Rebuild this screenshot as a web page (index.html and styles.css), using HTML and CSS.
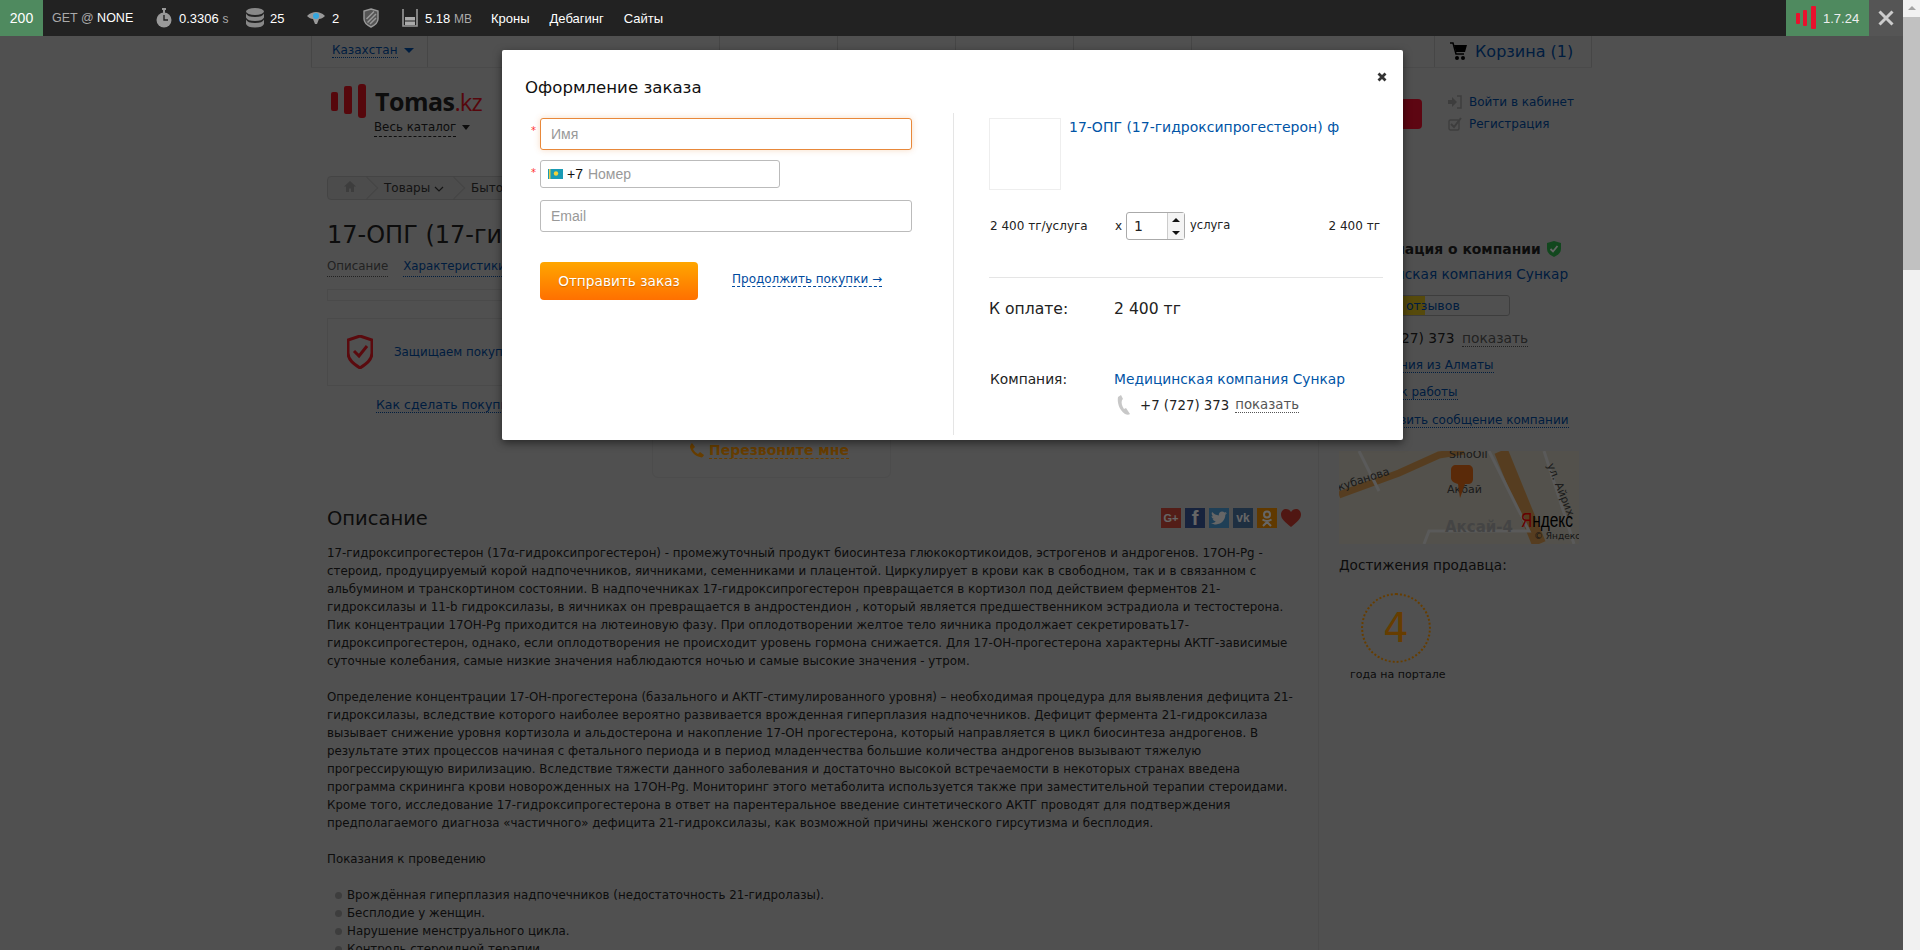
FILE: index.html
```html
<!DOCTYPE html>
<html>
<head>
    <meta charset="utf-8">
    <title>Оформление заказа - Tomas.kz</title>
    <link rel="stylesheet" href="styles.css">
</head>
<body>
<div class="window">
    <div class="viewport">
        <!-- debug toolbar -->
        <div class="toolbar">
            <div class="tb-status">200</div>
            <div class="tb-route"><span class="tb-dim">GET @</span> NONE</div>
            <div class="tb-item tb-time">
                <svg width="16" height="20" viewBox="0 0 16 20"><rect x="6" y="0" width="4" height="2" fill="#999"/><rect x="7" y="1" width="2" height="4" fill="#999"/><circle cx="8" cy="12" r="7.5" fill="#999"/><path d="M8 7v5h4" fill="none" stroke="#222" stroke-width="1.4"/></svg>
                <span>0.3306 <span class="tb-dim tb-small">s</span></span>
            </div>
            <div class="tb-item tb-db">
                <svg width="18" height="20" viewBox="0 0 18 20"><g fill="#888"><ellipse cx="9" cy="3.5" rx="9" ry="3.5"/><path d="M0 5.5c1 2.5 4 3.500 9 3.500s8-1 9-3.500v4c-1 2.500-4 3.500-9 3.500s-8-1-9-3.500z"/><path d="M0 11.500c1 2.500 4 3.500 9 3.500s8-1 9-3.500v4.500c-1 2.500-4 3.500-9 3.500s-8-1-9-3.500z"/></g></svg>
                <span>25</span>
            </div>
            <div class="tb-item tb-eye">
                <svg width="18" height="16" viewBox="0 0 18 16"><path d="M0 6c3-3 6-4 9-4s6 1 9 4c-2 2-4 3-6 3l-2 5h-2l-2-5c-2 0-4-1-6-3z" fill="#999"/><circle cx="9" cy="6" r="3" fill="#35a7e0"/></svg>
                <span>2</span>
            </div>
            <div class="tb-item tb-shield">
                <svg width="16" height="20" viewBox="0 0 16 20"><path d="M8 1l7 2v8c0 4-3 6-7 8-4-2-7-4-7-8V3z" fill="#555" stroke="#999" stroke-width="1.400"/><path d="M3.500 11L11 3.500M4.500 14.500L13 6M7 16l6-6" stroke="#999" stroke-width="1.500"/></svg>
            </div>
            <div class="tb-item tb-mem">
                <svg width="16" height="20" viewBox="0 0 16 20"><path d="M1 1v17h14V1" fill="none" stroke="#999" stroke-width="1.600"/><rect x="3" y="9" width="10" height="3.500" fill="#aaa"/><rect x="3" y="13.500" width="10" height="3.500" fill="#aaa"/></svg>
                <span>5.18 <span class="tb-dim tb-small">MB</span></span>
            </div>
            <div class="tb-menu">Кроны</div>
            <div class="tb-menu">Дебагинг</div>
            <div class="tb-menu">Сайты</div>
            <div class="tb-version">
                <svg width="20" height="24" viewBox="0 0 20 24"><rect x="0" y="7" width="4" height="11" rx="1" fill="#e8112d"/><rect x="7" y="4" width="4" height="16" rx="1" fill="#e8112d"/><rect x="15" y="0" width="5" height="23" rx="1" fill="#e8112d"/></svg>
                <span>1.7.24</span>
            </div>
            <div class="tb-close">
                <svg width="16" height="16" viewBox="0 0 16 16"><path d="M1.500 1.500l13 13M14.500 1.500l-13 13" stroke="#ccc" stroke-width="3"/></svg>
            </div>
        </div>

        <div class="stage">
            <div class="wrap">
                <div class="topnav">
                    <div class="region"><span class="dashed-link">Казахстан</span><span class="caret"></span></div>
                    <div class="topnav-cell w-292"></div>
                    <div class="topnav-cell"></div>
                    <div class="topnav-cell"></div>
                    <div class="topnav-cell"></div>
                    <div class="topnav-cell"></div>
                    <div class="topnav-fill"></div>
                    <div class="cart">
                        <svg width="17" height="19" viewBox="0 0 17 19"><path d="M0 1h3l3 11h8" fill="none" stroke="#000" stroke-width="1.500"/><path d="M4 3h13l-2 7H6z" fill="#000"/><circle cx="7" cy="16" r="2" fill="#000"/><circle cx="13" cy="16" r="2" fill="#000"/></svg>
                        <span>Корзина (1)</span>
                    </div>
                </div>

                <div class="header">
                    <div class="logo-block">
                        <div class="logo">
                            <svg width="36" height="34" viewBox="0 0 36 34"><rect x="0" y="8" width="7" height="19" rx="2" fill="#d8121f"/><rect x="13" y="2" width="8" height="28" rx="2" fill="#d8121f"/><rect x="27" y="0" width="8" height="34" rx="3" fill="#d8121f"/></svg>
                            <span class="logo-name">Tomas<span class="logo-kz">.kz</span></span>
                        </div>
                        <div class="catalog"><span class="catalog-link">Весь каталог</span><span class="caret caret-dark"></span></div>
                    </div>
                    <div class="search-btn"></div>
                    <div class="auth">
                        <div class="auth-row">
                            <svg width="14" height="14" viewBox="0 0 14 14"><path d="M0 5h4V2l5 5-5 5V9H0z" fill="#999"/><path d="M9 1h4v12H9" fill="none" stroke="#999" stroke-width="1.500"/></svg>
                            <span>Войти в кабинет</span>
                        </div>
                        <div class="auth-row">
                            <svg width="14" height="14" viewBox="0 0 14 14"><rect x="1" y="3" width="10" height="10" rx="1.500" fill="none" stroke="#999" stroke-width="1.400"/><path d="M3 7l3 3 7-9" fill="none" stroke="#999" stroke-width="2"/></svg>
                            <span>Регистрация</span>
                        </div>
                    </div>
                </div>

                <div class="columns">
                    <div class="main">
                        <div class="crumbs">
                            <span class="crumb crumb-home"><svg width="12" height="11" viewBox="0 0 12 11"><path d="M6 0l6 5.500h-2V11H7V7.500H5V11H2V5.500H0z" fill="#999"/></svg></span>
                            <span class="crumb">Товары <svg width="10" height="6" viewBox="0 0 10 6"><path d="M1 1l4 4 4-4" fill="none" stroke="#333" stroke-width="1.200"/></svg></span>
                            <span class="crumb">Бытовая техника</span>
                        </div>
                        <h1 class="product-title">17-ОПГ (17-гидроксипрогестерон) ф</h1>
                        <div class="tabs">
                            <span class="tab tab-active">Описание</span>
                            <span class="tab">Характеристики</span>
                        </div>
                        <div class="tabs-bar"></div>
                        <div class="protect">
                            <svg width="26" height="34" viewBox="0 0 26 34"><path d="M13 1l12 4v13c0 7-6 11-12 15C7 29 1 25 1 18V5z" fill="none" stroke="#e01b24" stroke-width="3"/><path d="M7 16l5 5 8-10" fill="none" stroke="#e01b24" stroke-width="3"/></svg>
                            <span>Защищаем покупателей</span>
                        </div>
                        <div class="howto"><span class="dotted-link">Как сделать покупку</span></div>
                        <div class="callback">
                            <svg width="16" height="16" viewBox="0 0 16 16"><path d="M3 1l3 4-2 2c1 2 3 4 5 5l2-2 4 3c-1 2-2 3-4 2C6 14 2 10 1 5c0-2 1-3 2-4z" fill="#f90"/></svg>
                            <span class="callback-link">Перезвоните мне</span>
                        </div>

                        <div class="desc-head">
                            <h2>Описание</h2>
                            <div class="share">
                                <span class="soc soc-g">G+</span>
                                <span class="soc soc-f">f</span>
                                <span class="soc soc-t"><svg width="16" height="14" viewBox="0 0 16 14"><path d="M16 2c-.6.300-1.200.400-1.900.500.700-.400 1.200-1 1.400-1.800-.600.400-1.300.600-2.100.800C12.800.900 12 .500 11 .500 9.200.500 7.800 2 7.800 3.700c0 .300 0 .500.100.700C5.200 4.300 2.800 3 1.100 1 .800 1.500.700 2 .700 2.600c0 1.100.600 2.100 1.400 2.700-.500 0-1-.200-1.500-.400 0 1.600 1.100 2.900 2.600 3.200-.500.100-1 .100-1.500 0 .400 1.300 1.600 2.200 3 2.300C3.600 11.500 2 12 0 11.900 1.400 12.800 3.100 13.400 5 13.400c6 0 9.300-5 9.300-9.300v-.400c.700-.500 1.200-1 1.700-1.700z" fill="#fff"/></svg></span>
                                <span class="soc soc-v">vk</span>
                                <span class="soc soc-o"><svg width="12" height="17" viewBox="0 0 12 17"><circle cx="6" cy="4.500" r="3" fill="none" stroke="#fff" stroke-width="2"/><path d="M1.500 9.500c3 2 6 2 9 0M6 11v1.500M2 16l4-4 4 4" fill="none" stroke="#fff" stroke-width="2"/></svg></span>
                                <svg class="heart" width="20" height="18" viewBox="0 0 20 18"><path d="M10 18C4 13 0 10 0 5.500 0 2 2.500 0 5 0c2 0 4 1 5 3 1-2 3-3 5-3 2.500 0 5 2 5 5.500C20 10 16 13 10 18z" fill="#c93a2e"/></svg>
                            </div>
                        </div>
                        <div class="desc">
                            <p>17-гидроксипрогестерон (17α-гидроксипрогестерон) - промежуточный продукт биосинтеза глюкокортикоидов, эстрогенов и андрогенов. 17OH-Pg - стероид, продуцируемый корой надпочечников, яичниками, семенниками и плацентой. Циркулирует в крови как в свободном, так и в связанном с альбумином и транскортином состоянии. В надпочечниках 17-гидроксипрогестерон превращается в кортизол под действием ферментов 21-гидроксилазы и 11-b гидроксилазы, в яичниках он превращается в андростендион , который является предшественником эстрадиола и тестостерона. Пик концентрации 17OH-Pg приходится на лютеиновую фазу. При оплодотворении желтое тело яичника продолжает секретировать17-гидроксипрогестерон, однако, если оплодотворения не происходит уровень гормона снижается. Для 17-OH-прогестерона характерны АКТГ-зависимые суточные колебания, самые низкие значения наблюдаются ночью и самые высокие значения - утром.</p>
                            <p>Определение концентрации 17-OH-прогестерона (базального и АКТГ-стимулированного уровня) – необходимая процедура для выявления дефицита 21-гидроксилазы, вследствие которого наиболее вероятно развивается врожденная гиперплазия надпочечников. Дефицит фермента 21-гидроксилаза вызывает снижение уровня кортизола и альдостерона и накопление 17-OH прогестерона, который направляется в цикл биосинтеза андрогенов. В результате этих процессов начиная с фетального периода и в период младенчества большие количества андрогенов вызывают тяжелую прогрессирующую вирилизацию. Вследствие тяжести данного заболевания и достаточно высокой встречаемости в некоторых странах введена программа скрининга крови новорожденных на 17OH-Pg. Мониторинг этого метаболита используется также при заместительной терапии стероидами. Кроме того, исследование 17-гидроксипрогестерона в ответ на парентеральное введение синтетического АКТГ проводят для подтверждения предполагаемого диагноза «частичного» дефицита 21-гидроксилазы, как возможной причины женского гирсутизма и бесплодия.</p>
                            <p>Показания к проведению</p>
                            <ul>
                                <li>Врождённая гиперплазия надпочечников (недостаточность 21-гидролазы).</li>
                                <li>Бесплодие у женщин.</li>
                                <li>Нарушение менструального цикла.</li>
                                <li>Контроль стероидной терапии.</li>
                            </ul>
                        </div>
                    </div>

                    <div class="side">
                        <div class="side-title">Информация о компании
                            <svg width="14" height="16" viewBox="0 0 14 16"><path d="M7 0l7 2v6c0 4-3 6-7 8-4-2-7-4-7-8V2z" fill="#2fb24c"/><path d="M3.500 8l2.500 2.500L10.500 5" fill="none" stroke="#fff" stroke-width="1.800"/></svg>
                        </div>
                        <div class="side-company">Медицинская компания Сункар</div>
                        <div class="rating"><div class="rating-fill"></div><span>5 отзывов</span></div>
                        <div class="side-phone">+7 (727) 373 <span class="show-link">показать</span></div>
                        <div class="side-link"><span class="dotted-link">Компания из Алматы</span></div>
                        <div class="side-link"><span class="dotted-link">График работы</span></div>
                        <div class="side-link"><span class="dotted-link">Отправить сообщение компании</span></div>
                        <div class="map">
                            <svg width="240" height="93" viewBox="0 0 240 93">
                                <rect width="240" height="93" fill="#cfcbbd"/>
                                <path d="M0 44L60 22 100 4 125 0" fill="none" stroke="#d89a50" stroke-width="7"/>
                                <path d="M162 0l38 93" fill="none" stroke="#d89a50" stroke-width="14"/>
                                <path d="M20 0l20 40M150 0l40 80H90l-5 13M205 0l30 93" fill="none" stroke="#e0e0e0" stroke-width="3"/>
                                <text x="0" y="40" class="map-label" transform="rotate(-18 0 40)">кубанова</text>
                                <text x="110" y="7" class="map-label">SinoOil</text>
                                <text x="108" y="42" class="map-label">Акбай</text>
                                <text x="106" y="81" class="map-big">Аксай-4</text>
                                <text x="208" y="14" class="map-label" transform="rotate(68 208 14)">ул. Айрих</text>
                                <path d="M112 19c0-3 2-5 5-5h12c3 0 5 2 5 5v9c0 3-2 5-5 5h-3l-5 14-2-14c-4-1-7-3-7-6z" fill="#e06a18"/>
                                <text x="182" y="76" class="map-ya" textLength="52" lengthAdjust="spacingAndGlyphs"><tspan fill="#f00">Я</tspan>ндекс</text>
                                <text x="195" y="88" class="map-copy">© Яндекс</text>
                            </svg>
                        </div>
                        <div class="side-head">Достижения продавца:</div>
                        <div class="years">
                            <div class="years-circle">4</div>
                            <div class="years-label">года на портале</div>
                        </div>
                    </div>
                </div>
            </div>

            <div class="overlay"></div>

            <!-- order popup -->
            <div class="modal">
                <svg class="modal-close" width="10" height="10" viewBox="0 0 10 10"><path d="M1.500 1.500l7 7M8.500 1.500l-7 7" stroke="#333" stroke-width="2.800"/></svg>
                <div class="modal-title">Оформление заказа</div>
                <div class="modal-body">
                    <div class="order-form">
                        <div class="field">
                            <span class="req">*</span>
                            <input class="input input-focus" type="text" placeholder="Имя">
                        </div>
                        <div class="field field-phone">
                            <span class="req">*</span>
                            <div class="phone">
                                <svg class="flag" width="15" height="10" viewBox="0 0 15 10"><rect width="15" height="10" fill="#1a9bb5"/><circle cx="8" cy="4.500" r="2.200" fill="#f5d33a"/><rect x="1" y="0" width="1.500" height="10" fill="#e6cc4a"/></svg>
                                <span class="phone-code">+7</span>
                                <input class="phone-input" type="text" placeholder="Номер">
                            </div>
                        </div>
                        <div class="field field-email">
                            <input class="input" type="text" placeholder="Email">
                        </div>
                        <div class="form-actions">
                            <button class="send-btn">Отправить заказ</button>
                            <span class="continue">Продолжить покупки →</span>
                        </div>
                    </div>
                    <div class="order-summary">
                        <div class="item">
                            <div class="item-img"></div>
                            <a class="item-name">17-ОПГ (17-гидроксипрогестерон) ф</a>
                        </div>
                        <div class="item-row">
                            <span class="item-price">2 400 тг/услуга</span>
                            <span class="item-x">х</span>
                            <div class="qty">
                                <span class="qty-val">1</span>
                                <div class="qty-spin">
                                    <span class="spin-up"></span>
                                    <span class="spin-down"></span>
                                </div>
                            </div>
                            <span class="item-unit">услуга</span>
                            <span class="item-total">2 400 тг</span>
                        </div>
                        <div class="pay-row">
                            <span class="pay-label">К оплате:</span>
                            <span>2 400 тг</span>
                        </div>
                        <div class="company-row">
                            <span class="company-label">Компания:</span>
                            <a class="company-name">Медицинская компания Сункар</a>
                        </div>
                        <div class="company-phone">
                            <svg width="13" height="20" viewBox="0 0 13 20"><path d="M4 0L1 2C0 7 2 15 8 19c2 1 4 1 5 0l-4-6-2 1C5 11 4 8 5 5l1-1z" fill="#c8c8c8"/></svg>
                            <span>+7 (727) 373</span>
                            <span class="show-link">показать</span>
                        </div>
                    </div>
                </div>
            </div>
        </div>
    </div>
    <div class="scrollbar">
        <div class="scroll-up"></div>
        <div class="scroll-thumb"></div>
    </div>
</div>
</body>
</html>
```

FILE: styles.css
```css
* {
    box-sizing: border-box;
}
html, body {
    margin: 0;
    padding: 0;
    height: 100%;
    overflow: hidden;
}
body {
    background: #c8c8c8;
    color: #222;
    font-family: "DejaVu Sans", Verdana, sans-serif;
    font-size: 11.83px;
}
.window {
    display: flex;
    height: 950px;
}
.viewport {
    flex: 1;
    min-width: 0;
    display: flex;
    flex-direction: column;
}

/* toolbar */
.toolbar {
    height: 36px;
    flex: none;
    display: flex;
    align-items: center;
    background: #222;
    color: #fff;
    font-family: "Liberation Sans", Arial, sans-serif;
    font-size: 13px;
}
.tb-dim {
    color: #aaa;
}
.tb-small {
    font-size: 12px;
}
.tb-status {
    width: 43px;
    height: 36px;
    line-height: 36px;
    text-align: center;
    background: #4f8a5f;
    font-size: 14px;
}
.tb-route {
    margin-left: 9px;
    width: 104px;
    font-size: 12.5px;
}
.tb-item {
    display: flex;
    align-items: center;
    gap: 7px;
}
.tb-time {
    width: 90px;
}
.tb-db {
    gap: 6px;
    width: 61px;
}
.tb-eye {
    gap: 7px;
    width: 56px;
}
.tb-shield {
    width: 39px;
}
.tb-mem {
    width: 89px;
}
.tb-menu {
    margin-right: 20px;
}
.tb-version {
    margin-left: auto;
    width: 83px;
    height: 36px;
    display: flex;
    align-items: center;
    gap: 7px;
    padding-left: 10px;
    background: #4f8a5f;
    color: #eee;
}
.tb-close {
    width: 34px;
    height: 36px;
    background: #555;
    display: flex;
    align-items: center;
    justify-content: center;
}

/* scrollbar */
.scrollbar {
    width: 17px;
    flex: none;
    background: #f1f1f1;
}
.scroll-up {
    height: 17px;
    position: relative;
}
.scroll-up::after {
    content: "";
    position: absolute;
    left: 5px;
    top: 6px;
    border: 4px solid transparent;
    border-top: 0;
    border-bottom: 4px solid #a3a3a3;
}
.scroll-thumb {
    height: 253px;
    background: #c1c1c1;
}

/* page under the overlay */
.stage {
    flex: 1;
    min-height: 0;
    position: relative;
    overflow: hidden;
}
.overlay {
    position: absolute;
    inset: 0;
    background: rgba(0, 0, 0, .6);
}
.wrap {
    width: 1281px;
    margin: 0 auto;
}
.topnav {
    display: flex;
    height: 32px;
    border-bottom: 1px solid #b8b8b8;
}
.region {
    width: 117px;
    padding: 7px 0 0 20px;
    border-left: 1px solid #b0b0b0;
    border-right: 1px solid #b0b0b0;
    color: #004a9e;
    font-size: 12px;
}
.dashed-link {
    border-bottom: 1px dotted #004a9e;
}
.caret {
    display: inline-block;
    margin-left: 6px;
    vertical-align: middle;
    border: 5px solid transparent;
    border-top: 5px solid #004a9e;
    border-bottom: 0;
}
.caret-dark {
    border-width: 4px;
    border-top-width: 5px;
    border-bottom: 0;
    margin-left: 6px;
    border-top-color: #222;
}
.topnav-cell {
    width: 118px;
    border-right: 1px solid #b0b0b0;
}
.w-292 {
    width: 292px;
}
.topnav-fill {
    flex: 1;
}
.cart {
    width: 158px;
    display: flex;
    align-items: center;
    gap: 8px;
    padding-left: 15px;
    border-left: 1px solid #b0b0b0;
    border-right: 1px solid #b0b0b0;
    color: #004a9e;
    font-size: 16px;
}
.header {
    height: 108px;
    display: flex;
    padding: 16px 0 0 20px;
}
.logo-block {
    width: 160px;
    flex: none;
}
.logo {
    display: flex;
    align-items: center;
    gap: 8px;
    height: 34px;
}
.logo-name {
    font-family: "Open Sans", sans-serif;
    font-size: 25px;
    font-weight: 700;
    color: #222;
    letter-spacing: -.5px;
}
.logo-kz {
    color: #d8121f;
    font-weight: 400;
    font-size: 24px;
    letter-spacing: -1px;
}
.catalog {
    margin: 2px 0 0 43px;
}
.catalog-link {
    border-bottom: 1px dashed #222;
    padding-bottom: 2px;
}
.search-btn {
    width: 100px;
    height: 30px;
    margin: 15px 26px 0 auto;
    border-radius: 4px;
    background: #e8112d;
}
.auth {
    width: 144px;
    flex: none;
    margin-top: 7px;
    color: #004a9e;
    font-size: 12px;
}
.auth-row {
    display: flex;
    align-items: center;
    gap: 7px;
    height: 22px;
    white-space: nowrap;
}
.columns {
    display: flex;
}
.main {
    width: 1008px;
    padding: 0 17px 0 16px;
    border-right: 1px solid #bbb;
    flex: none;
}
.crumbs {
    height: 24px;
    display: flex;
    align-items: center;
    border: 1px solid #aaa;
    border-radius: 4px;
    background: #bdbdbd;
    font-size: 12px;
    color: #333;
}
.crumb {
    position: relative;
    padding: 0 27px 0 0;
}
.crumb::after {
    content: "";
    position: absolute;
    right: 9px;
    top: -1px;
    width: 15px;
    height: 15px;
    border-top: 1px solid #aaa;
    border-right: 1px solid #aaa;
    transform: rotate(45deg);
}
.crumb:last-child::after {
    display: none;
}
.crumb-home {
    padding: 0 28px 0 16px;
}
.product-title {
    margin: 20px 0 0;
    font-size: 24px;
    font-weight: 400;
    line-height: 30px;
    white-space: nowrap;
    color: #222;
}
.tabs {
    display: flex;
    gap: 15px;
    margin-top: 9px;
    height: 18px;
    color: #004a9e;
}
.tab {
    border-bottom: 1px dotted #004a9e;
}
.tab-active {
    color: #555;
    border-bottom-color: #555;
}
.tabs-bar {
    height: 12px;
    margin-top: 12px;
    border: 1px solid #b8b8b8;
}
.protect {
    height: 68px;
    margin-top: 17px;
    display: flex;
    align-items: center;
    gap: 21px;
    padding-left: 19px;
    border: 1px solid #b8b8b8;
    color: #004a9e;
}
.howto {
    margin: 11px 0 0 49px;
    height: 18px;
    color: #004a9e;
    font-size: 12.500px;
}
.dotted-link {
    border-bottom: 1px dotted #004a9e;
}
.callback {
    width: 239px;
    height: 48px;
    margin: 15px 0 0 325px;
    padding: 11px 0 0 36px;
    display: flex;
    gap: 4px;
    align-items: flex-start;
    border: 1px solid #bdbdbd;
    border-radius: 6px;
}
.callback-link {
    color: #f90;
    font-weight: bold;
    font-size: 14px;
    border-bottom: 1px dashed #f90;
}
.desc-head {
    display: flex;
    justify-content: space-between;
    align-items: center;
    height: 24px;
    margin-top: 28px;
}
.desc-head h2 {
    margin: 0;
    font-size: 19.5px;
    font-weight: 400;
    color: #222;
}
.share {
    display: flex;
    gap: 4px;
    align-items: center;
}
.soc {
    width: 20px;
    height: 20px;
    display: flex;
    align-items: center;
    justify-content: center;
    color: #fff;
    font-family: "Liberation Sans", Arial, sans-serif;
    font-weight: bold;
    font-size: 11px;
}
.soc-g {
    background: #cf4a3a;
}
.soc-f {
    background: #3b5998;
    font-size: 20px;
}
.soc-t {
    background: #4f9fd8;
}
.soc-v {
    background: #4c75a3;
    font-size: 12px;
}
.soc-o {
    background: #f09000;
}
.desc {
    margin-top: 14px;
    line-height: 18px;
    color: #222;
}
.desc p {
    margin: 0 0 18px;
}
.desc p + p {
    margin-top: 18px;
}
.desc ul {
    list-style: none;
    margin: 0;
    padding: 0 0 0 20px;
}
.desc li {
    position: relative;
}
.desc li::before {
    content: "";
    position: absolute;
    left: -12px;
    top: 6px;
    width: 7px;
    height: 7px;
    border-radius: 50%;
    background: #999;
}

/* sidebar */
.side {
    flex: 1;
    padding: 64px 0 0 20px;
    font-size: 13px;
}
.side-title {
    font-size: 13.9px;
    font-weight: bold;
    height: 18px;
    line-height: 18px;
    white-space: nowrap;
    display: flex;
    align-items: center;
    gap: 6px;
}
.side-company {
    margin-top: 7px;
    height: 18px;
    line-height: 18px;
    color: #004a9e;
    font-size: 13.7px;
}
.rating {
    width: 171px;
    height: 21px;
    margin-top: 12px;
    position: relative;
    border: 1px solid #999;
    border-radius: 3px;
    color: #004a9e;
    font-size: 12.5px;
    line-height: 19px;
    padding-left: 54px;
    white-space: nowrap;
}
.rating-fill {
    position: absolute;
    left: 0;
    top: 0;
    bottom: 0;
    width: 85px;
    background: #d8b820;
}
.rating span {
    position: relative;
}
.side-phone {
    margin-top: 13px;
    padding-left: 23px;
    height: 18px;
    line-height: 18px;
    font-size: 13.8px;
    white-space: nowrap;
}
.show-link {
    margin-left: 3px;
    color: #555;
    border-bottom: 1px dotted #555;
}
.side-link {
    margin-top: 9.5px;
    padding-left: 21px;
    height: 18px;
    line-height: 16px;
    color: #004a9e;
    font-size: 12px;
}
.map {
    margin-top: 21px;
    width: 240px;
    height: 93px;
}
.map svg {
    display: block;
}
.map-label {
    font-family: "DejaVu Sans", sans-serif;
    font-size: 11px;
    fill: #444;
}
.map-big {
    font-family: "DejaVu Sans", sans-serif;
    font-size: 15px;
    font-weight: bold;
    fill: #aaa;
}
.map-ya {
    font-family: "Liberation Sans", sans-serif;
    font-size: 20px;
    fill: #000;
}
.map-copy {
    font-family: "DejaVu Sans", sans-serif;
    font-size: 9px;
    fill: #333;
}
.side-head {
    margin-top: 12px;
    height: 18px;
    line-height: 18px;
    font-size: 13.6px;
}
.years {
    width: 92px;
    margin: 19px 0 0 11px;
    text-align: center;
}
.years-circle {
    width: 70px;
    height: 70px;
    margin: 0 auto;
    border: 2px dotted #f90;
    border-radius: 50%;
    color: #f90;
    font-size: 40px;
    line-height: 66px;
}
.years-label {
    margin-top: 5px;
    font-size: 11px;
    white-space: nowrap;
}

/* modal */
.modal {
    position: absolute;
    left: 502px;
    top: 14px;
    width: 901px;
    height: 390px;
    background: #fff;
    border-radius: 2px;
    box-shadow: 0 3px 9px rgba(0, 0, 0, .5);
    padding-top: 27px;
    color: #222;
}
.modal-close {
    position: absolute;
    right: 16px;
    top: 22px;
}
.modal-title {
    margin-left: 23px;
    font-size: 16.6px;
    line-height: 22px;
    color: #111;
}
.modal-body {
    display: flex;
    margin-top: 14px;
}
.order-form {
    width: 452px;
    height: 322px;
    padding: 5px 0 0 38px;
    border-right: 1px solid #e5e5e5;
}
.field {
    position: relative;
}
.req {
    position: absolute;
    left: -9px;
    top: 7px;
    color: #f33;
    font-size: 10px;
}
.input {
    display: block;
    width: 372px;
    height: 32px;
    padding: 0 10px;
    border: 1px solid #bbb;
    border-radius: 3px;
    font-family: "Liberation Sans", Arial, sans-serif;
    font-size: 14px;
    outline: none;
}
.input-focus {
    border-color: #e8883a;
    box-shadow: 0 0 6px rgba(232, 136, 58, .3);
}
input::placeholder {
    color: #999;
    opacity: 1;
}
.field-phone {
    margin-top: 10px;
}
.phone {
    width: 240px;
    height: 28px;
    display: flex;
    align-items: center;
    padding-left: 7px;
    border: 1px solid #bbb;
    border-radius: 3px;
    font-family: "Liberation Sans", Arial, sans-serif;
    font-size: 14px;
}
.flag {
    flex: none;
}
.phone-code {
    margin-left: 4px;
    color: #111;
}
.phone-input {
    flex: 1;
    min-width: 0;
    margin-left: 5px;
    border: 0;
    padding: 0;
    outline: none;
    font-family: "Liberation Sans", Arial, sans-serif;
    font-size: 14px;
}
.field-email {
    margin-top: 12px;
}
.form-actions {
    display: flex;
    align-items: center;
    gap: 34px;
    margin-top: 30px;
}
.send-btn {
    width: 158px;
    height: 38px;
    border: 0;
    border-radius: 4px;
    background: linear-gradient(#ffa600, #ff7000);
    color: #fff;
    font-family: "DejaVu Sans", Verdana, sans-serif;
    font-size: 13.7px;
    text-shadow: 0 1px 1px rgba(0, 0, 0, .2);
}
.continue {
    color: #004a9e;
    border-bottom: 1px dashed #004a9e;
    margin-bottom: 4px;
    font-size: 12px;
}
.order-summary {
    flex: 1;
    padding: 5px 20px 0 35px;
}
.item {
    display: flex;
    gap: 8px;
}
.item-img {
    width: 72px;
    height: 72px;
    border: 1px solid #eee;
    flex: none;
}
.item-name {
    color: #0054a6;
    font-size: 14px;
    line-height: 18px;
}
.item-row {
    display: flex;
    align-items: center;
    margin-top: 22px;
    padding-bottom: 37px;
    border-bottom: 1px solid #e5e5e5;
    font-size: 12px;
    height: 66px;
}
.item-price {
    width: 126px;
    padding-left: 1px;
}
.item-x {
    width: 11px;
}
.qty {
    width: 59px;
    height: 28px;
    display: flex;
    border: 1px solid #aaa;
    border-radius: 3px;
}
.qty-val {
    flex: 1;
    padding-left: 7px;
    line-height: 26px;
    font-size: 14px;
}
.qty-spin {
    width: 17px;
    border-left: 1px solid #ccc;
    display: flex;
    flex-direction: column;
    background: #f4f4f4;
}
.spin-up, .spin-down {
    flex: 1;
    display: flex;
    align-items: center;
    justify-content: center;
}
.spin-up::after {
    content: "";
    border: 4px solid transparent;
    border-top: 0;
    border-bottom: 4px solid #111;
}
.spin-down::after {
    content: "";
    border: 4px solid transparent;
    border-bottom: 0;
    border-top: 4px solid #111;
}
.item-unit {
    margin-left: 5px;
    font-size: 11.5px;
    margin-bottom: 2px;
}
.item-total {
    margin-left: auto;
    padding-right: 3px;
}
.pay-row {
    display: flex;
    margin-top: 21px;
    font-size: 15.6px;
    line-height: 20px;
}
.pay-label {
    width: 125px;
}
.company-row {
    display: flex;
    margin-top: 51px;
    font-size: 13.8px;
    line-height: 18px;
}
.company-label {
    width: 125px;
    padding-left: 1px;
}
.company-name {
    color: #0054a6;
}
.company-phone {
    display: flex;
    align-items: center;
    gap: 10px;
    margin: 7px 0 0 128px;
    font-size: 13.3px;
    height: 20px;
    white-space: nowrap;
}
.company-phone .show-link {
    margin-left: -4px;
}
```
